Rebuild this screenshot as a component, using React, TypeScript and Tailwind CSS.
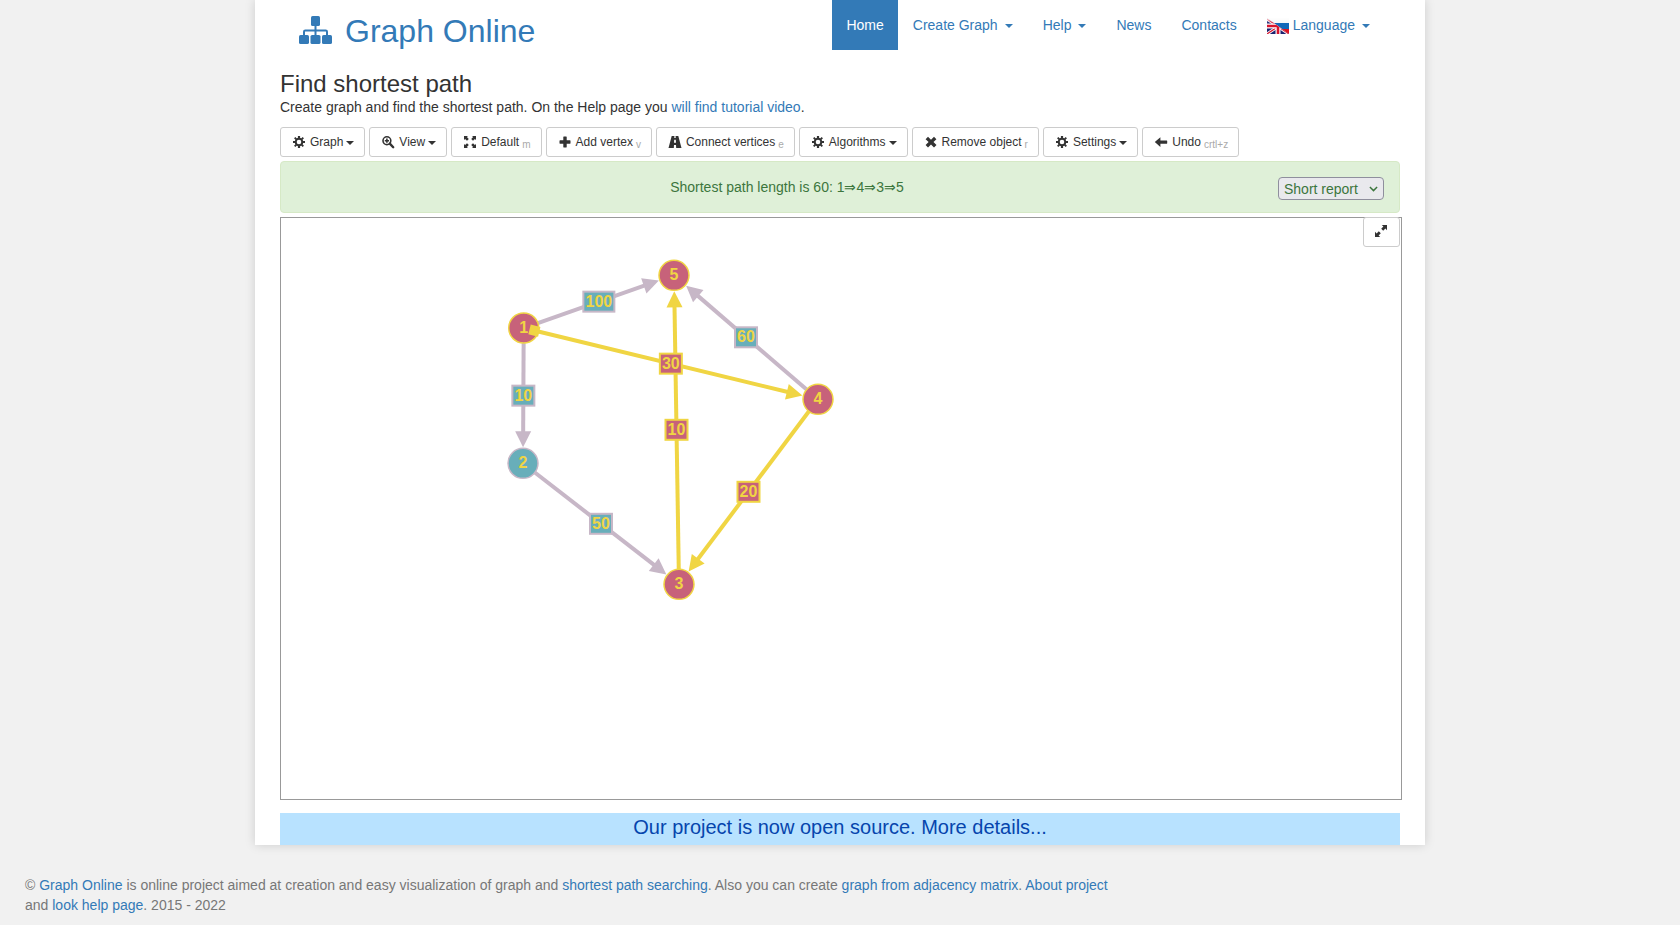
import type { ReactNode } from "react";

type Point = { x: number; y: number };
type GraphNode = Point & { id: number; onPath: boolean };
type GraphEdge = { from: number; to: number; weight: number; onPath: boolean };

const NODES: GraphNode[] = [
  { id: 1, x: 242.7, y: 110, onPath: true },
  { id: 2, x: 242, y: 245.3, onPath: false },
  { id: 3, x: 398, y: 366.3, onPath: true },
  { id: 4, x: 537, y: 181.3, onPath: true },
  { id: 5, x: 393, y: 57.3, onPath: true },
];

const EDGES: GraphEdge[] = [
  { from: 1, to: 2, weight: 10, onPath: false },
  { from: 1, to: 5, weight: 100, onPath: false },
  { from: 2, to: 3, weight: 50, onPath: false },
  { from: 4, to: 5, weight: 60, onPath: false },
  { from: 3, to: 5, weight: 10, onPath: true },
  { from: 4, to: 3, weight: 20, onPath: true },
  { from: 1, to: 4, weight: 30, onPath: true },
];

const YELLOW = "#f0d543";
const LILAC = "#c7b7c7";
const TEAL = "#68aeba";
const ROSE = "#c7627a";
const NODE_RADIUS = 15;

const nodeById = (id: number) => NODES.find((n) => n.id === id) as GraphNode;

function along(a: Point, b: Point, distance: number, side = 0): Point {
  const length = Math.hypot(b.x - a.x, b.y - a.y);
  const ux = (b.x - a.x) / length;
  const uy = (b.y - a.y) / length;
  return { x: a.x + ux * distance - uy * side, y: a.y + uy * distance + ux * side };
}

function EdgeShape({ edge }: { edge: GraphEdge }) {
  const a = nodeById(edge.from);
  const b = nodeById(edge.to);
  const color = edge.onPath ? YELLOW : LILAC;
  const start = along(a, b, NODE_RADIUS);
  const end = along(b, a, 30);
  const tip = along(b, a, 16);
  const left = along(b, a, 32, 8);
  const right = along(b, a, 32, -8);
  const width = String(edge.weight).length * 9 + 4;
  const cx = (a.x + b.x) / 2;
  const cy = (a.y + b.y) / 2;
  return (
    <g>
      <line x1={start.x} y1={start.y} x2={end.x} y2={end.y} stroke={color} strokeWidth={4} />
      <polygon points={`${tip.x},${tip.y} ${left.x},${left.y} ${right.x},${right.y}`} fill={color} />
      <rect
        x={cx - width / 2}
        y={cy - 10}
        width={width}
        height={20}
        fill={edge.onPath ? ROSE : TEAL}
        stroke={color}
        strokeWidth={2}
      />
      <text x={cx} y={cy + 5} textAnchor="middle" fill={YELLOW} fontSize={16} fontWeight={700}>
        {edge.weight}
      </text>
    </g>
  );
}

function GraphDrawing() {
  const s1 = along(nodeById(1), nodeById(4), 6);
  const s2 = along(nodeById(1), nodeById(4), 16);
  return (
    <svg className="block h-full w-full" role="img" aria-label="Graph">
      {EDGES.map((edge) => (
        <EdgeShape key={`${edge.from}-${edge.to}`} edge={edge} />
      ))}
      {NODES.map((node) => (
        <g key={node.id}>
          <circle
            cx={node.x}
            cy={node.y}
            r={NODE_RADIUS}
            fill={node.onPath ? ROSE : TEAL}
            stroke={node.onPath ? YELLOW : LILAC}
            strokeWidth={1.5}
          />
          <text x={node.x} y={node.y + 5} textAnchor="middle" fill={YELLOW} fontSize={16} fontWeight={700}>
            {node.id}
          </text>
        </g>
      ))}
      <line x1={s1.x} y1={s1.y} x2={s2.x} y2={s2.y} stroke={YELLOW} strokeWidth={10} />
    </svg>
  );
}

function Glyph({ children }: { children: ReactNode }) {
  return (
    <svg viewBox="0 0 12 12" className="h-3 w-3 shrink-0 overflow-visible" fill="currentColor" aria-hidden="true">
      {children}
    </svg>
  );
}

function CogGlyph() {
  return (
    <Glyph>
      <circle cx="6" cy="6" r="3.3" fill="none" stroke="currentColor" strokeWidth="2" />
      <g stroke="currentColor" strokeWidth="2.2">
        <path d="M6 0v2.4M6 9.6V12M0 6h2.4M9.6 6H12" />
        <path d="M1.7 1.7l1.7 1.7M8.6 8.6l1.7 1.7M1.7 10.3l1.7-1.7M8.6 3.4l1.7-1.7" strokeWidth="1.9" />
      </g>
    </Glyph>
  );
}

function ZoomGlyph() {
  return (
    <Glyph>
      <circle cx="4.9" cy="4.7" r="3.9" fill="none" stroke="currentColor" strokeWidth="1.6" />
      <path d="M7.8 7.6l3.4 3.6" stroke="currentColor" strokeWidth="2.4" strokeLinecap="round" />
      <path d="M4.1 2.6h1.6v1.3H7v1.6H5.7v1.3H4.1V5.5H2.8V3.9h1.3z" />
    </Glyph>
  );
}

function FullscreenGlyph() {
  return (
    <Glyph>
      <path d="M0 0h4L2.9 1.1 4.8 3 3 4.8 1.1 2.9 0 4z" />
      <path d="M12 0v4l-1.1-1.1L9 4.8 7.2 3l1.9-1.9L8 0z" />
      <path d="M0 12V8l1.1 1.1L3 7.2 4.8 9l-1.9 1.9L4 12z" />
      <path d="M12 12H8l1.1-1.1L7.2 9 9 7.2l1.9 1.9L12 8z" />
    </Glyph>
  );
}

function PlusGlyph() {
  return (
    <Glyph>
      <path d="M4.7.5h2.6q.4 0 .4.4v3.4H11q.5 0 .5.4v2.6q0 .4-.5.4H7.7v3.4q0 .4-.4.4H4.7q-.4 0-.4-.4V7.7H1q-.5 0-.5-.4V4.7q0-.4.5-.4h3.3V.9q0-.4.4-.4z" />
    </Glyph>
  );
}

function RoadGlyph() {
  return (
    <Glyph>
      <path
        fillRule="evenodd"
        d="M2.7 0h2.7l-.1 1.9h1.4L6.6 0h2.7l3.2 12H7.2L7 9.1H5L4.8 12H-.5zM5.2 3.7L5 6.7h2l-.2-3z"
      />
    </Glyph>
  );
}

function RemoveGlyph() {
  return (
    <Glyph>
      <path d="M3 .8l3 3 3-3 2.4 2.4L8.5 6.1l3 3L9 11.6l-3-3-3 3L.6 9.1l3-3-3-2.9z" />
    </Glyph>
  );
}

function ArrowLeftGlyph() {
  return (
    <Glyph>
      <path d="M-.2 6.1L5.4 1.3v3.2h6.4q.4 0 .4.4v2.4q0 .4-.4.4H5.4v3.2z" />
    </Glyph>
  );
}

function ResizeFullGlyph() {
  return (
    <Glyph>
      <path d="M6.8 0H12v5.2l-1.6-1.6-2.2 2.2-2-2 2.2-2.2z" />
      <path d="M0 6.8l1.6 1.6 2.2-2.2 2 2-2.2 2.2L5.2 12H0z" />
    </Glyph>
  );
}

function Caret() {
  return (
    <span
      className="inline-block h-0 w-0 border-x-4 border-t-4 border-x-transparent border-t-current align-middle"
      aria-hidden="true"
    />
  );
}

function ToolButton({
  icon,
  label,
  hint,
  menu = false,
}: {
  icon: ReactNode;
  label: string;
  hint?: string;
  menu?: boolean;
}) {
  return (
    <button
      type="button"
      className="flex h-[30px] items-center whitespace-nowrap rounded-[3px] border border-[#ccc] bg-white pl-3 pr-[10px] text-[12px] leading-[18px] text-[#333]"
    >
      {icon}
      <span className="ml-[5px]">{label}</span>
      {hint && <sub className="ml-[3px] text-[10px] leading-none text-[#aaa]">{hint}</sub>}
      {menu && (
        <span className="ml-[3px] flex pt-[2px]">
          <Caret />
        </span>
      )}
    </button>
  );
}

function LogoIcon() {
  return (
    <svg viewBox="0 0 33 28" className="mt-[6px] h-7 w-[33px]" fill="#337ab7" aria-hidden="true">
      <rect x="12" y="0" width="9" height="10" rx="1.6" />
      <rect x="0" y="19" width="10" height="9" rx="1.6" />
      <rect x="11.5" y="19" width="10" height="9" rx="1.6" />
      <rect x="23" y="19" width="10" height="9" rx="1.6" />
      <path
        d="M16.5 9v11M5 20v-4.2q0-1.3 1.3-1.3h20.4q1.3 0 1.3 1.3V20"
        fill="none"
        stroke="#337ab7"
        strokeWidth="2"
      />
    </svg>
  );
}

function FlagIcon() {
  return (
    <svg viewBox="0 0 22 16" className="h-4 w-[22px] shrink-0" aria-hidden="true">
      <defs>
        <clipPath id="flag-lower">
          <path d="M0 0L22 16H0z" />
        </clipPath>
        <linearGradient id="flag-fade" x1="0" y1="0" x2="0" y2="1">
          <stop offset="0" stopColor="#fff" stopOpacity="0.9" />
          <stop offset="1" stopColor="#fff" stopOpacity="0" />
        </linearGradient>
      </defs>
      <rect width="22" height="5.3" fill="#f7f7f7" />
      <rect y="5" width="22" height="6" fill="#1268b8" />
      <rect y="11" width="22" height="5" fill="#e0131f" />
      <g clipPath="url(#flag-lower)">
        <rect width="22" height="16" fill="#1c2370" />
        <path d="M0 1l22 15M0 16L22 1" stroke="#fff" strokeWidth="3" />
        <path d="M0 1l22 15M0 16L22 1" stroke="#d8142c" strokeWidth="1.2" />
        <path d="M11 0v16M0 8h22" stroke="#fff" strokeWidth="5" />
        <path d="M11 0v16M0 8h22" stroke="#d8142c" strokeWidth="2.6" />
      </g>
      <rect width="22" height="5" fill="url(#flag-fade)" />
    </svg>
  );
}

function NavItem({
  label,
  active = false,
  menu = false,
  icon,
}: {
  label: string;
  active?: boolean;
  menu?: boolean;
  icon?: ReactNode;
}) {
  return (
    <li>
      <a
        href="#"
        className={
          active
            ? "flex items-center bg-[#337ab7] px-[14px] py-[15px] text-white"
            : "flex items-center p-[15px] text-[#337ab7]"
        }
      >
        {icon && <span className="mr-1 flex pt-[2px]">{icon}</span>}
        {label}
        {menu && (
          <span className="ml-[7px] flex pt-[2px]">
            <Caret />
          </span>
        )}
      </a>
    </li>
  );
}

function Link({ children }: { children: ReactNode }) {
  return (
    <a href="#" className="text-[#337ab7]">
      {children}
    </a>
  );
}

export default function App() {
  return (
    <div className="min-h-screen bg-[#f1f1f1] font-['Liberation_Sans',Arial,sans-serif] text-[14px] leading-5 text-[#333]">
      <div className="mx-auto max-w-[1170px] bg-white px-[25px] shadow-[0_0_10px_rgba(0,0,0,0.15)]">
        <header className="flex h-[71px] items-start justify-between px-[15px]">
          <a href="#" className="ml-1 flex items-start pt-[10px] text-[32px] leading-[42px] text-[#337ab7]">
            <LogoIcon />
            <span className="ml-[13px]">Graph Online</span>
          </a>
          <nav>
            <ul className="flex">
              <NavItem label="Home" active />
              <NavItem label="Create Graph" menu />
              <NavItem label="Help" menu />
              <NavItem label="News" />
              <NavItem label="Contacts" />
              <NavItem label="Language" menu icon={<FlagIcon />} />
            </ul>
          </nav>
        </header>

        <main>
          <h1 className="text-[24px] leading-[26px]">Find shortest path</h1>
          <p>
            Create graph and find the shortest path. On the Help page you <Link>will find tutorial video</Link>.
          </p>

          <div className="mt-[10px] flex flex-wrap gap-1">
            <ToolButton icon={<CogGlyph />} label="Graph" menu />
            <ToolButton icon={<ZoomGlyph />} label="View" menu />
            <ToolButton icon={<FullscreenGlyph />} label="Default" hint="m" />
            <ToolButton icon={<PlusGlyph />} label="Add vertex" hint="v" />
            <ToolButton icon={<RoadGlyph />} label="Connect vertices" hint="e" />
            <ToolButton icon={<CogGlyph />} label="Algorithms" menu />
            <ToolButton icon={<RemoveGlyph />} label="Remove object" hint="r" />
            <ToolButton icon={<CogGlyph />} label="Settings" menu />
            <ToolButton icon={<ArrowLeftGlyph />} label="Undo" hint="crtl+z" />
          </div>

          <div className="mt-1 flex items-start rounded-[4px] border border-[#d6e9c6] bg-[#dff0d8] p-[15px] pb-3 text-[#3c763d]">
            <p className="flex-1 text-center">Shortest path length is 60: 1⇒4⇒3⇒5</p>
            <div className="relative">
              <select
                aria-label="Report type"
                className="block h-[23px] w-[106px] appearance-none rounded-[4px] border border-[#8f8f9d] bg-[#e9e9ed] pl-[5px] leading-5"
              >
                <option>Short report</option>
                <option>Full report</option>
              </select>
              <svg
                viewBox="0 0 10 6"
                className="pointer-events-none absolute right-[6px] top-[9px] h-[6px] w-[9px]"
                fill="none"
                stroke="currentColor"
                strokeWidth="1.6"
                aria-hidden="true"
              >
                <path d="M1 .8l4 4 4-4" />
              </svg>
            </div>
          </div>

          <section className="relative -mr-[2px] mt-1 h-[583px] border border-[#999]">
            <GraphDrawing />
            <button
              type="button"
              aria-label="Fullscreen"
              className="absolute -top-px right-px flex h-[30px] w-[37px] items-start rounded-[3px] border border-[#ccc] bg-white pl-[11px] pt-[7px] text-[#333]"
            >
              <ResizeFullGlyph />
            </button>
          </section>

          <a
            href="#"
            className="mt-[13px] block h-8 bg-[#b8e2ff] text-center text-[20px] leading-7 text-[#0645ad]"
          >
            Our project is now open source. More details...
          </a>
        </main>
      </div>

      <footer className="mt-[30px] px-[25px] text-[#777]">
        <p className="max-w-[1105px]">
          © <Link>Graph Online</Link> is online project aimed at creation and easy visualization of graph and{" "}
          <Link>shortest path searching</Link>. Also you can create <Link>graph from adjacency matrix</Link>.{" "}
          <Link>About project</Link> and <Link>look help page</Link>. 2015 - 2022
        </p>
      </footer>
    </div>
  );
}
